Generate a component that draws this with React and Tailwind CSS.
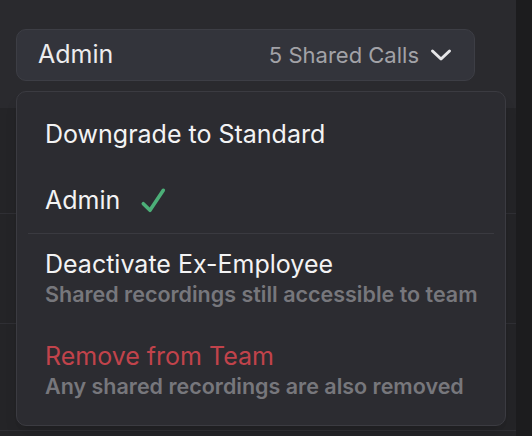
import React from 'react';

const Chevron = () => (
  <svg width="22" height="14" viewBox="0 0 22 14" fill="none" className="shrink-0">
    <polyline points="2.5,3 11,11 19.5,3" stroke="#e6e6e8" strokeWidth="3" strokeLinecap="round" strokeLinejoin="round" />
  </svg>
);

const CheckMark = () => (
  <svg width="26" height="26" viewBox="0 0 26 26" fill="none" className="shrink-0">
    <polyline points="3.3,16.7 10,23.3 23.3,3.3" stroke="#4caf78" strokeWidth="3.6" strokeLinecap="round" strokeLinejoin="round" />
  </svg>
);

const MenuItem = ({ title, hint, danger, className = '', children }) => (
  <div className={`pl-[28px] pr-4 ${className}`}>
    <div className={`flex items-center gap-[20px] text-[25px] leading-[32px] ${danger ? 'text-[#c1434b]' : 'text-[#f3f3f4]'}`}>
      <span>{title}</span>
      {children}
    </div>
    {hint && (
      <div className="text-[21.5px] leading-[28px] font-semibold text-[#77777c]">{hint}</div>
    )}
  </div>
);

export default function App() {
  return (
    <div className="w-[532px] h-[436px] flex bg-[#1c1c1e] overflow-hidden font-['Inter',sans-serif]">
      <div className="relative w-[516px] flex flex-col bg-[#242427]">
        <div className="h-[108px] shrink-0 bg-[#2a2a2e] pt-[29px] pl-4">
          <button className="w-[459px] h-[52px] flex items-center justify-between rounded-[10px] border border-[#3d3e45] bg-[#33343b] pl-[21px] pr-[22px]">
            <span className="text-[25px] text-[#ececee]">Admin</span>
            <span className="flex items-center gap-[11px]">
              <span className="text-[22px] text-[#a2a2a7]">5 Shared Calls</span>
              <Chevron />
            </span>
          </button>
        </div>
        <div className="h-[106px] shrink-0 border-b border-[#2f2f34]" />
        <div className="h-[110px] shrink-0 border-b border-[#2f2f34]" />
        <div className="h-[107px] shrink-0 border-b border-[#2f2f34]" />
        <div className="flex-1" />

        <div className="absolute left-4 top-[91px] w-[490px] rounded-[10px] border border-[#3b3b41] bg-[#2c2c31] pt-[9px] pb-[9px] shadow-lg">
          <MenuItem title="Downgrade to Standard" className="py-[17px]" />
          <MenuItem title="Admin" className="py-[17px]">
            <CheckMark />
          </MenuItem>
          <div className="mx-[11px] h-px bg-[#3a3a40]" />
          <MenuItem
            title="Deactivate Ex-Employee"
            hint="Shared recordings still accessible to team"
            className="pt-[14px] pb-4"
          />
          <MenuItem
            title="Remove from Team"
            hint="Any shared recordings are also removed"
            danger
            className="py-4"
          />
        </div>
      </div>
    </div>
  );
}
